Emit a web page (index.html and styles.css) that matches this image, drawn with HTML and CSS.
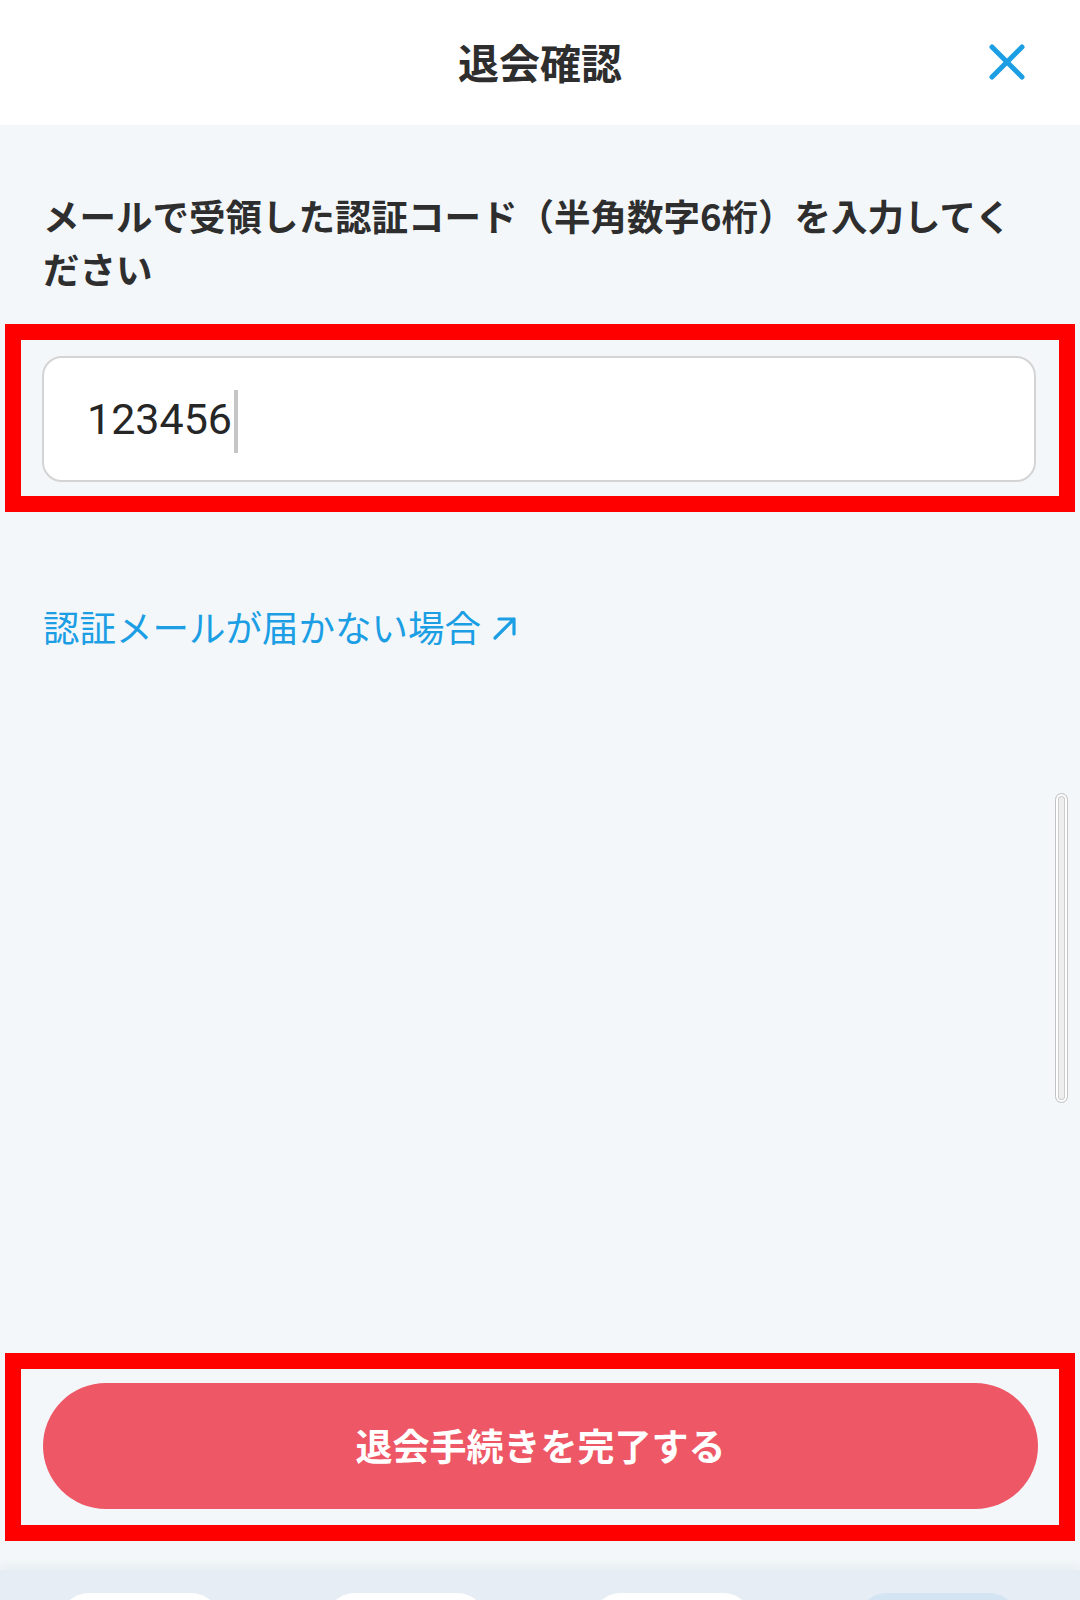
FILE: index.html
```html
<!DOCTYPE html>
<html lang="ja">
<head>
<meta charset="utf-8">
<title>退会確認</title>
<link rel="stylesheet" href="styles.css">
</head>
<body>
<div class="app">
  <header class="topbar">
    <span class="topbar-spacer"></span>
    <h1 class="topbar-title">退会確認</h1>
    <button class="close-btn" type="button" aria-label="閉じる">
      <svg width="36" height="36" viewBox="0 0 36 36" aria-hidden="true">
        <path d="M3 3 L33 33 M33 3 L3 33" stroke="#1b9ee4" stroke-width="5" stroke-linecap="round" fill="none"/>
      </svg>
    </button>
  </header>

  <main class="content">
    <p class="lead">メールで受領した認証コード（半角数字6桁）を入力してください</p>

    <div class="highlight highlight-input">
      <div class="code-input">
        <span class="code-value">123456</span><span class="caret"></span>
      </div>
    </div>

    <a class="help-link" href="#">認証メールが届かない場合<svg class="ext-icon" width="26" height="26" viewBox="0 0 26 26" aria-hidden="true"><path d="M3 23 L22 4 M7 4 H22 V19" stroke="#1b9ee4" stroke-width="3.2" fill="none" stroke-linecap="round" stroke-linejoin="round"/></svg></a>

    <div class="highlight highlight-button">
      <button class="submit-btn" type="button">退会手続きを完了する</button>
    </div>

    <div class="scrollbar"></div>
  </main>

  <nav class="bottom-nav">
    <span class="nav-pill"></span>
    <span class="nav-pill"></span>
    <span class="nav-pill"></span>
    <span class="nav-pill nav-pill-active"></span>
  </nav>
</div>
</body>
</html>
```

FILE: styles.css
```css
* {
  box-sizing: border-box;
}

html, body {
  margin: 0;
  padding: 0;
}

body {
  width: 1080px;
  height: 1600px;
  overflow: hidden;
  font-family: "Noto Sans CJK JP", "Noto Sans", sans-serif;
  color: #333333;
  background: #f3f7fa;
}

.app {
  width: 1080px;
  height: 1600px;
  display: flex;
  flex-direction: column;
  overflow: hidden;
}

/* Header */
.topbar {
  flex: none;
  height: 125px;
  background: #ffffff;
  display: grid;
  grid-template-columns: 1fr auto 1fr;
  align-items: center;
}

.topbar-title {
  margin: 0;
  font-size: 41px;
  font-weight: 700;
  color: #2e2e2e;
  letter-spacing: 0;
  line-height: 1;
  padding-bottom: 2px;
}

.close-btn {
  justify-self: end;
  margin-right: 55px;
  width: 36px;
  height: 36px;
  padding: 0;
  border: none;
  background: transparent;
  display: flex;
  align-items: center;
  justify-content: center;
  margin-top: -2px;
}

/* Content */
.content {
  position: relative;
  flex: none;
  height: 1445px;
  display: flex;
  flex-direction: column;
  padding-top: 64px;
  padding-bottom: 29px;
  background: #f3f7fa;
}

.lead {
  margin: 0;
  padding: 0 60px 0 43px;
  font-size: 36.5px;
  font-weight: 700;
  line-height: 53px;
  color: #2e2e2e;
}

.highlight {
  border: 16px solid #ff0000;
  margin: 0 5px;
}

.highlight-input {
  margin-top: 29px;
  padding: 16px 23px 14px 21px;
}

.code-input {
  height: 126px;
  background: #ffffff;
  border: 2px solid #d4d4d4;
  border-radius: 20px;
  display: flex;
  align-items: center;
  padding-left: 43px;
}

.code-value {
  font-family: Roboto, "Noto Sans", sans-serif;
  font-size: 43px;
  color: #262626;
  line-height: 1;
  letter-spacing: 0;
}

.caret {
  display: inline-block;
  width: 4px;
  height: 63px;
  margin-left: 2px;
  margin-top: 4px;
  background: #c6c6c6;
}

.help-link {
  margin-top: 90px;
  margin-left: 43px;
  align-self: flex-start;
  display: flex;
  align-items: center;
  gap: 11px;
  font-size: 36.5px;
  line-height: 50px;
  color: #1b9ee4;
  text-decoration: none;
}

.ext-icon {
  margin-top: 2px;
}

.highlight-button {
  margin-top: auto;
  padding: 14px 21px 16px 22px;
}

.submit-btn {
  display: block;
  width: 100%;
  height: 126px;
  border: none;
  border-radius: 63px;
  background: #ee5766;
  color: #ffffff;
  font-family: "Noto Sans CJK JP", "Noto Sans", sans-serif;
  font-size: 37px;
  font-weight: 700;
  letter-spacing: 0;
  padding: 0 0 2px;
}

.scrollbar {
  position: absolute;
  right: 12px;
  top: 668px;
  width: 13px;
  height: 310px;
  border-radius: 7px;
  border: 1px solid #c2c2c2;
  background: #eeeeee;
  box-shadow: inset 0 0 0 2px #ffffff, inset 0 0 0 3px #cccccc;
}

/* Bottom nav */
.bottom-nav {
  flex: none;
  height: 160px;
  background: #e6edf5;
  box-shadow: 0 -5px 8px rgba(190, 200, 212, 0.18);
  display: flex;
  align-items: flex-start;
  gap: 104px;
  padding: 23px 0 0 59px;
  position: relative;
}

.nav-pill {
  width: 162px;
  height: 70px;
  border-radius: 30px;
  background: #ffffff;
}

.nav-pill-active {
  background: #d3e4f3;
}
```
